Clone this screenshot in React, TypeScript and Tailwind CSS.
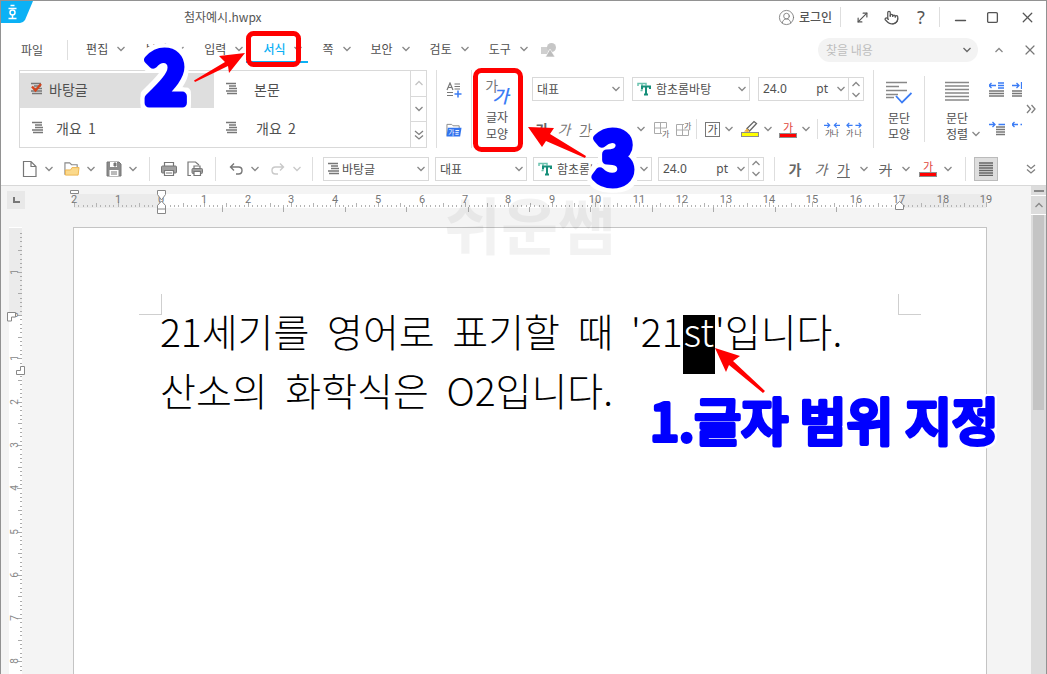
import React from "react";
import { MoveDiagonal, Pointer, X, Minus, Square, CircleUserRound } from "lucide-react";

type ChevronProps = { className?: string; up?: boolean };

function Chevron({ className = "text-[#888]", up = false }: ChevronProps) {
  return (
    <svg width="10" height="8" viewBox="0 0 10 8" className={`shrink-0 ${className}`} aria-hidden="true">
      <path d={up ? "M1.5 6 5 2.5 8.5 6" : "M1.5 2 5 5.5 8.5 2"} fill="none" stroke="currentColor" strokeWidth="1.3" />
    </svg>
  );
}

function Divider({ className = "mx-3 h-6" }: { className?: string }) {
  return <span className={`w-px shrink-0 bg-[#dedede] ${className}`} />;
}

type IconButtonProps = {
  label: string;
  chevron?: boolean;
  className?: string;
  chevronClass?: string;
  children: React.ReactNode;
};

function IconButton({ label, chevron = false, className = "", chevronClass, children }: IconButtonProps) {
  return (
    <button type="button" aria-label={label} className={`flex shrink-0 items-center gap-1.5 ${className}`}>
      <span className="flex h-5 w-4 items-center justify-center">{children}</span>
      {chevron && <Chevron className={chevronClass} />}
    </button>
  );
}

type ComboProps = {
  label: string;
  value: string;
  width: string;
  pad?: string;
  icon?: React.ReactNode;
};

function Combo({ label, value, width, pad = "pl-1", icon }: ComboProps) {
  return (
    <div className={`relative h-6 shrink-0 border border-[#d9d9d9] bg-white ${width}`}>
      {icon && <span className="pointer-events-none absolute top-0 left-1 flex h-full items-center">{icon}</span>}
      <select aria-label={label} className={`h-full w-full appearance-none bg-transparent pr-4 text-xs outline-none ${pad}`}>
        <option>{value}</option>
      </select>
      <span className="pointer-events-none absolute top-0 right-0.5 flex h-full items-center">
        <Chevron />
      </span>
    </div>
  );
}

function SizeBox() {
  return (
    <div className="flex h-6 w-[106px] shrink-0 border border-[#d9d9d9] bg-white">
      <input
        aria-label="글자 크기"
        defaultValue="24.0"
        className="w-13 bg-transparent pl-1 font-['Noto_Sans',sans-serif] text-xs outline-none"
      />
      <button type="button" aria-label="크기 목록" className="flex flex-1 items-center justify-end gap-2 pr-0.5">
        <span className="font-['Noto_Sans',sans-serif] text-xs">pt</span>
        <Chevron />
      </button>
      <span className="flex w-[15px] flex-col border-l border-[#d9d9d9]">
        <button type="button" aria-label="크게" className="flex flex-1 items-center justify-center">
          <Chevron up />
        </button>
        <button type="button" aria-label="작게" className="flex flex-1 items-center justify-center">
          <Chevron />
        </button>
      </span>
    </div>
  );
}

function StyleIcon({ checked = false }: { checked?: boolean }) {
  return (
    <svg width="12" height="13" viewBox="0 0 12 13" aria-hidden="true">
      <path d="M0 1.5H10M3 4H10M3 6.5H11M0 9H11M1 11.5H11" stroke="#777" strokeWidth="1.3" fill="none" />
      {checked && <path d="M1 4.5 4.5 8.5 10 2" stroke="#d2451e" strokeWidth="2.4" fill="none" />}
    </svg>
  );
}

function FontIcon() {
  return (
    <svg width="15" height="14" viewBox="0 0 15 14" aria-hidden="true">
      <path d="M1 4V1.5H9V3.500M5 1.500V8.500M3.500 8.500H5.500" stroke="#6cc3b0" strokeWidth="1.5" fill="none" />
      <path d="M5 7V4.500H13V7M9 4.500V12.500M7 12.500H11" stroke="#178f7a" strokeWidth="2" fill="none" />
    </svg>
  );
}

function FontColorIcon() {
  return (
    <span className="flex w-[18px] shrink-0 flex-col items-center">
      <span className="text-[11px] leading-3 text-[#e0473b]">가</span>
      <span className="h-[5px] w-[18px] border border-[#8d8d8d] bg-[#f00]" />
    </span>
  );
}

function HighlightIcon() {
  return (
    <svg width="18" height="18" viewBox="0 0 18 18" className="shrink-0" aria-hidden="true">
      <path d="M6 8.500 13 1.500 15.500 3.500 8.500 11Z" fill="#fff" stroke="#666" strokeWidth="1.3" />
      <path d="M3 11.500 6 8.500 8.500 11 7 12Z" fill="#f0b03f" />
      <rect x=".5" y="12.500" width="17" height="4" fill="#ff0" stroke="#8d8d8d" />
    </svg>
  );
}

function NewIcon() {
  return (
    <svg width="16" height="18" viewBox="0 0 16 18" aria-hidden="true">
      <path d="M1.500 1.500H9L14 6.500V16.500H1.500ZM9 1.500V6.500H14" fill="#fff" stroke="#777" strokeWidth="1.2" />
    </svg>
  );
}

function OpenIcon() {
  return (
    <svg width="17" height="16" viewBox="0 0 17 16" aria-hidden="true">
      <path d="M1 14V1.500H6L8 3.500H14V6" fill="#fff" stroke="#888" strokeWidth="1.2" />
      <path d="M1.500 14.500V9H7L8.500 6.500H16L15 14.500Z" fill="#fbd98b" stroke="#edb34c" />
    </svg>
  );
}

function SaveIcon() {
  return (
    <svg width="16" height="16" viewBox="0 0 16 16" aria-hidden="true">
      <path d="M1 1H13L15 3V15H1Z" fill="#8b8b8b" stroke="#777" />
      <path d="M4 1H11V6H4ZM3.500 9H12.500V15H3.500Z" fill="#fff" />
      <path d="M8 2H10V5H8ZM5 11H11M5 13H11" fill="#777" stroke="#777" />
    </svg>
  );
}

function PrintIcon() {
  return (
    <svg width="16" height="16" viewBox="0 0 16 16" aria-hidden="true">
      <path d="M3.500 5V1.500H12.500V5" fill="#fff" stroke="#777" strokeWidth="1.2" />
      <rect x=".5" y="5" width="15" height="7" rx="1" fill="#a0a0a0" stroke="#777" />
      <path d="M3.500 9.500H12.500V14.500H3.500Z" fill="#fff" stroke="#777" strokeWidth="1.2" />
      <path d="M5 12H11" stroke="#777" />
    </svg>
  );
}

function PreviewIcon() {
  return (
    <svg width="16" height="16" viewBox="0 0 16 16" aria-hidden="true">
      <path d="M4 14.500H1V1H8.500L12 4" fill="none" stroke="#777" strokeWidth="1.2" />
      <path d="M7 7V5H13V7" fill="#fff" stroke="#777" strokeWidth="1.2" />
      <rect x="5" y="7.500" width="10.500" height="5" rx="1" fill="#a0a0a0" stroke="#777" />
      <path d="M7 10.500H13.500V14.500H7Z" fill="#fff" stroke="#777" strokeWidth="1.2" />
    </svg>
  );
}

function UndoIcon({ flip = false }: { flip?: boolean }) {
  return (
    <svg width="14" height="14" viewBox="0 0 14 14" aria-hidden="true" className={flip ? "-scale-x-100 text-[#c9c9c9]" : "text-[#777]"}>
      <path d="M5 1.500 1.500 5 5 8.500M1.500 5H9.500Q13 5 13 8.500T9.500 12H7" fill="none" stroke="currentColor" strokeWidth="1.4" />
    </svg>
  );
}

function GridIcon({ alt = false }: { alt?: boolean }) {
  return (
    <svg width="16" height="17" viewBox="0 0 16 17" aria-hidden="true">
      <path
        d={alt ? "M.5 3.500H8M.5 3.500V14.500H12.500V9M6.500 3.500V14.500M.5 9H12.500" : "M.5 1.500H12.500V7M.5 1.500V12.500H8M6.500 1.500V12.500M.5 7H12.500"}
        fill="none"
        stroke="#aaa"
      />
      <text x="8" y={alt ? 8 : 16} fontSize="8" fill="#666">
        가
      </text>
    </svg>
  );
}

function SpacingIcon({ wide = false }: { wide?: boolean }) {
  return (
    <svg width="17" height="17" viewBox="0 0 17 17" aria-hidden="true">
      <path
        d={wide ? "M1 4H7M3.500 1.500 1 4 3.500 6.500M10 4H16M13.500 1.500 16 4 13.500 6.500" : "M0 4H6M3.500 1.500 6 4 3.500 6.500M11 4H17M13.500 1.500 11 4 13.500 6.500"}
        fill="none"
        stroke="#3b7cf5"
        strokeWidth="1.3"
      />
      <text x={wide ? 0 : 1} y="15" fontSize="8.5" fill="#555">
        가
      </text>
      <text x={wide ? 9 : 8} y="15" fontSize="8.5" fill="#555">
        나
      </text>
    </svg>
  );
}

function AddStyleIcon() {
  return (
    <svg width="16" height="17" viewBox="0 0 16 17" aria-hidden="true">
      <path d="M1 8 4 1 7 8M2 5.500H6" fill="none" stroke="#777" strokeWidth="1.2" />
      <path d="M8.500 2H14M8.500 4.500H14M8.500 7H14M1 10.500H7M1 13.500H7" stroke="#777" fill="none" strokeWidth="1.2" />
      <path d="M8.500 12H15.500M12 8.500V15.500" stroke="#3b7cf5" strokeWidth="1.5" />
    </svg>
  );
}

function StyleFolderIcon() {
  return (
    <svg width="17" height="15" viewBox="0 0 17 15" aria-hidden="true">
      <path d="M1 13V1H6L7.500 2.500H14V5" fill="#fff" stroke="#888" />
      <path d="M2 4.500H16.500L15 14H.5Z" fill="#3274ee" />
      <text x="2.500" y="12" fontSize="7" fill="#fff">
        가
      </text>
      <path d="M10 7.500H14M10 9.500H13.500M10 11.500H13.500" stroke="#fff" />
    </svg>
  );
}

function ParagraphShapeIcon() {
  return (
    <svg width="26" height="24" viewBox="0 0 26 24" aria-hidden="true">
      <path d="M0 1.500H21M0 5.500H13M0 9.500H21M0 13.500H12M0 16.500H8" stroke="#888" strokeWidth="1.6" />
      <path d="M10 15 16 21.500 25.500 12" fill="none" stroke="#3b7cf5" strokeWidth="1.8" />
    </svg>
  );
}

function JustifyIcon() {
  return (
    <svg width="24" height="24" viewBox="0 0 24 24" aria-hidden="true">
      <path d="M0 1.500H24M0 5H24M0 8.500H24M0 12H24M0 15.500H24M0 19H24" stroke="#888" strokeWidth="1.6" />
    </svg>
  );
}

function IndentIcon({ kind }: { kind: "out" | "in" | "first" | "hang" }) {
  const arrow = {
    out: "M0 3.500H7M2.500 1 0 3.500 2.500 6M9 1H15M9 3.500H15M9 6H15",
    in: "M0 3.500H7M4.500 1 7 3.500 4.500 6M9.500 0V7",
    first: "M0 3.500H6M3.500 1 6 3.500 3.500 6M9.500 3.500H16",
    hang: "M0 3.500H6M2.500 1 0 3.500 2.500 6M8.500 3.500H10",
  }[kind];
  const lines = {
    out: "M0 9H15M0 11.500H15M0 14H15",
    in: "M0 9H10M0 11.500H10M0 14H10",
    first: "M7 6H16M7 8.500H16M7 11H16M7 13.500H16",
    hang: "",
  }[kind];
  const narrow = kind === "in" || kind === "hang";
  return (
    <svg width={narrow ? 10 : 17} height="15" viewBox={narrow ? "0 0 10 15" : "0 0 17 15"} aria-hidden="true">
      <path d={arrow} fill="none" stroke="#3b7cf5" strokeWidth="1.3" />
      <path d={lines} fill="none" stroke="#777" strokeWidth="1.4" />
    </svg>
  );
}

function DoubleChevron({ className = "" }: { className?: string }) {
  return (
    <svg width="10" height="10" viewBox="0 0 10 10" aria-hidden="true" className={`text-[#808080] ${className}`}>
      <path d="M1 1 5 4.500 9 1M1 5.500 5 9 9 5.500" fill="none" stroke="currentColor" strokeWidth="1.3" />
    </svg>
  );
}

function TitleBar() {
  return (
    <header className="flex h-8 items-center">
      <svg width="33" height="23" viewBox="0 0 33 23" className="self-start" role="img" aria-label="한글">
        <path d="M0 0H32L24 19Q22 22 19 22H0Z" fill="#0bb1f5" />
        <path d="M9.500 4.500H13.500M7.500 7.500H15.500M11.500 13.500V17M7.500 17.500H15.500" stroke="#fff" strokeWidth="1.5" fill="none" />
        <circle cx="11.500" cy="11.500" r="2.500" fill="none" stroke="#fff" strokeWidth="1.5" />
      </svg>
      <h1 className="ml-[150px] text-xs text-[#555]">첨자예시.hwpx</h1>
      <div className="ml-auto flex items-center pr-2.5 text-[#555]">
        <button type="button" className="flex items-center gap-1 text-xs font-medium">
          <CircleUserRound size={17} strokeWidth={1.2} className="text-[#777]" />
          로그인
        </button>
        <Divider className="mx-2 h-5" />
        <button type="button" aria-label="전체 화면" className="pr-3.5 pl-1.5">
          <MoveDiagonal size={15} strokeWidth={1.9} />
        </button>
        <button type="button" aria-label="터치 모드" className="pr-4">
          <Pointer size={15} strokeWidth={2} />
        </button>
        <button type="button" aria-label="도움말" className="w-3 font-['Noto_Sans',sans-serif] text-lg leading-5">
          ?
        </button>
        <Divider className="mx-3 h-5" />
        <button type="button" aria-label="최소화" className="pt-1.5 pr-[17px]">
          <Minus size={17} strokeWidth={2} />
        </button>
        <button type="button" aria-label="최대화" className="pr-5">
          <Square size={13} strokeWidth={2.4} />
        </button>
        <button type="button" aria-label="닫기">
          <X size={17} strokeWidth={1.8} />
        </button>
      </div>
    </header>
  );
}

const menus = ["편집", "보기", "입력", "서식", "쪽", "보안", "검토", "도구"];

function MenuBar() {
  return (
    <nav className="flex h-[34px] items-center pl-5 text-xs">
      <button type="button">파일</button>
      <Divider className="mr-[18px] ml-6 h-5" />
      <ul className="flex gap-[19px]">
        {menus.map((name) => (
          <li key={name}>
            <button
              type="button"
              className={
                name === "서식"
                  ? "-mr-[5px] -mb-1 -ml-[17px] flex items-center gap-2 border-b-2 border-[#0bb1f5] pr-[5px] pb-1 pl-[17px] font-medium text-[#0bb1f5]"
                  : "flex items-center gap-2"
              }
            >
              {name}
              <Chevron />
            </button>
          </li>
        ))}
      </ul>
      <svg width="16" height="15" viewBox="0 0 16 15" className="ml-3" aria-hidden="true">
        <path d="M0 4H7V11H0Z" fill="#cfcfcf" />
        <circle cx="10.500" cy="4.500" r="4.500" fill="#c6c6c6" />
        <path d="M9 6 14 14H4.500Z" fill="#bdbdbd" stroke="#fff" strokeWidth=".6" />
      </svg>
      <div className="ml-auto flex h-6 w-40 items-center rounded-full bg-[#f3f3f3] pr-1.5 pl-2">
        <input aria-label="찾을 내용" placeholder="찾을 내용" className="min-w-0 flex-1 bg-transparent text-xs outline-none placeholder:text-[#bdbdbd]" />
        <Chevron className="text-[#666]" />
      </div>
      <button type="button" aria-label="리본 접기" className="ml-4">
        <Chevron up />
      </button>
      <button type="button" aria-label="문서 닫기" className="mr-2 ml-[18px]">
        <X size={16} strokeWidth={1.8} className="text-[#777]" />
      </button>
    </nav>
  );
}

function Ribbon() {
  return (
    <section aria-label="서식" className="flex h-[85px] items-start pt-[3px] pl-[18px] text-xs">
      <div className="flex h-[78px] w-[408px] shrink-0 border border-[#d9d9d9] text-sm">
        <div className="grid flex-1 grid-cols-[194px_194px] grid-rows-2 gap-y-1 pt-0.5">
          <button type="button" className="flex items-center gap-1.5 bg-[#dedede] pb-1 pl-[11px]">
            <StyleIcon checked />
            바탕글
          </button>
          <button type="button" className="flex items-center gap-4 pb-1 pl-3">
            <StyleIcon />
            본문
          </button>
          <button type="button" className="flex items-center gap-3 pb-1 pl-3">
            <StyleIcon />
            <span className="whitespace-pre">개요  1</span>
          </button>
          <button type="button" className="flex items-center gap-[18px] pb-1 pl-3">
            <StyleIcon />
            <span className="whitespace-pre">개요  2</span>
          </button>
        </div>
        <div className="flex w-4 flex-col divide-y divide-[#d9d9d9] border-l border-[#d9d9d9]">
          <button type="button" aria-label="이전 스타일" className="flex flex-1 items-center justify-center">
            <Chevron up className="text-[#c4c4c4]" />
          </button>
          <button type="button" aria-label="다음 스타일" className="flex flex-1 items-center justify-center">
            <Chevron />
          </button>
          <button type="button" aria-label="모든 스타일" className="flex flex-1 items-center justify-center">
            <DoubleChevron />
          </button>
        </div>
      </div>
      <Divider className="mx-[9px] h-[78px]" />
      <div className="flex flex-col gap-5 pt-2.5">
        <IconButton label="스타일 추가">
          <AddStyleIcon />
        </IconButton>
        <IconButton label="스타일마당">
          <StyleFolderIcon />
        </IconButton>
      </div>
      <Divider className="ml-[9px] h-[78px]" />
      <button type="button" className="flex w-[50px] shrink-0 flex-col items-center leading-[17px]">
        <span className="flex h-[38px] items-center pt-1 text-[#777]">
          <span className="pb-3 text-sm">가</span>
          <span className="-ml-1.5 pt-2 text-lg font-medium text-[#3b7cf5] italic">가</span>
        </span>
        <span>글자</span>
        <span>모양</span>
      </button>
      <div className="ml-2.5 flex shrink-0 flex-col gap-4 pt-[7px]">
        <div className="flex gap-2">
          <Combo label="언어" value="대표" width="w-[92px]" />
          <Combo label="글꼴" value="함초롬바탕" width="w-[118px]" pad="pl-[23px]" icon={<FontIcon />} />
          <SizeBox />
        </div>
        <div className="flex h-6 items-center">
          <button type="button" className="w-5 text-sm font-bold text-[#666]">가</button>
          <button type="button" className="w-6 text-sm text-[#777] italic">가</button>
          <button type="button" className="w-5 text-sm text-[#777] underline">가</button>
          <button type="button" aria-label="밑줄 모양" className="ml-10">
            <Chevron />
          </button>
          <IconButton label="안쪽 테두리" className="ml-2">
            <GridIcon />
          </IconButton>
          <IconButton label="바깥 테두리" className="ml-1.5">
            <GridIcon alt />
          </IconButton>
          <Divider className="mx-1 h-5" />
          <button type="button" aria-label="글자 테두리" className="ml-1 flex items-center gap-1">
            <span className="h-[15px] w-[15px] border border-[#777] text-center text-[11px] leading-[13px]">가</span>
            <Chevron />
          </button>
          <button type="button" aria-label="형광펜" className="ml-[7px] flex items-center gap-1">
            <HighlightIcon />
            <Chevron />
          </button>
          <button type="button" aria-label="글자 색" className="ml-1.5 flex items-center gap-1">
            <FontColorIcon />
            <Chevron />
          </button>
          <Divider className="mx-1.5 h-5" />
          <IconButton label="자간 좁게">
            <SpacingIcon />
          </IconButton>
          <IconButton label="자간 넓게" className="ml-1.5">
            <SpacingIcon wide />
          </IconButton>
        </div>
      </div>
      <Divider className="ml-[9px] h-[78px]" />
      <button type="button" className="flex w-[50px] shrink-0 flex-col items-center leading-4">
        <span className="flex h-10 items-center pt-1.5">
          <ParagraphShapeIcon />
        </span>
        <span>문단</span>
        <span>모양</span>
      </button>
      <Divider className="mt-1.5 h-[66px]" />
      <div className="flex w-16 shrink-0 items-end">
        <button type="button" className="ml-5 flex w-6 flex-col items-center leading-4">
          <span className="flex h-10 items-center pt-1.5">
            <JustifyIcon />
          </span>
          <span>문단</span>
          <span>정렬</span>
        </button>
        <span className="mb-1 ml-0.5">
          <Chevron />
        </span>
      </div>
      <div className="grid shrink-0 grid-cols-[17px_10px] gap-x-1.5 gap-y-6 pt-3">
        <button type="button" aria-label="왼쪽 여백 줄이기"><IndentIcon kind="out" /></button>
        <button type="button" aria-label="왼쪽 여백 늘리기"><IndentIcon kind="in" /></button>
        <button type="button" aria-label="첫 줄 들여쓰기"><IndentIcon kind="first" /></button>
        <button type="button" aria-label="첫 줄 내어쓰기"><IndentIcon kind="hang" /></button>
      </div>
      <button type="button" aria-label="더 보기" className="mt-[34px] ml-1">
        <DoubleChevron className="-rotate-90" />
      </button>
    </section>
  );
}

function Toolbar() {
  return (
    <div role="toolbar" aria-label="기본 도구" className="flex h-[34px] items-center border-b border-[#d8d8d8] pl-[21px] text-xs">
      <div className="flex gap-2.5">
        <IconButton label="새 문서" chevron><NewIcon /></IconButton>
        <IconButton label="불러오기" chevron><OpenIcon /></IconButton>
        <IconButton label="저장하기" chevron><SaveIcon /></IconButton>
      </div>
      <Divider className="mx-[11px] h-6" />
      <div className="flex gap-2.5">
        <IconButton label="인쇄"><PrintIcon /></IconButton>
        <IconButton label="미리 보기"><PreviewIcon /></IconButton>
      </div>
      <Divider className="mx-3 h-6" />
      <div className="flex gap-2.5">
        <IconButton label="되돌리기" chevron><UndoIcon /></IconButton>
        <IconButton label="다시 실행" chevron chevronClass="text-[#c9c9c9]"><UndoIcon flip /></IconButton>
      </div>
      <Divider className="mx-2.5 h-6" />
      <div className="flex gap-1.5">
        <Combo label="스타일" value="바탕글" width="w-[106px]" pad="pl-[18px]" icon={<StyleIcon />} />
        <Combo label="언어" value="대표" width="w-[92px]" />
        <Combo label="글꼴" value="함초롬바탕" width="w-[119px]" pad="pl-[23px]" icon={<FontIcon />} />
        <SizeBox />
      </div>
      <Divider className="mx-2.5 h-6" />
      <button type="button" className="w-5 text-sm font-bold text-[#666]">가</button>
      <button type="button" className="ml-1.5 w-5 text-sm text-[#666] italic">가</button>
      <button type="button" className="ml-1.5 flex w-8 items-center justify-between text-sm text-[#666]">
        <span className="underline underline-offset-2">가</span>
        <Chevron />
      </button>
      <button type="button" className="ml-2.5 flex w-8 items-center justify-between text-sm text-[#666]">
        <span className="line-through">가</span>
        <Chevron />
      </button>
      <button type="button" aria-label="글자 색" className="ml-2 flex items-center gap-1.5">
        <FontColorIcon />
        <Chevron />
      </button>
      <Divider className="mr-2 ml-3 h-6" />
      <button type="button" aria-label="양쪽 정렬" aria-pressed="true" className="flex h-6 w-6 items-center justify-center border border-[#bbb] bg-[#dedede]">
        <svg width="14" height="14" viewBox="0 0 14 14" aria-hidden="true">
          <path d="M0 1H14M0 3.500H14M0 6H14M0 8.500H14M0 11H14M0 13.500H14" stroke="#666" strokeWidth="1.3" />
        </svg>
      </button>
      <button type="button" aria-label="도구 더 보기" className="mr-2.5 ml-auto">
        <DoubleChevron />
      </button>
    </div>
  );
}

const CM = 43.43;

function range(from: number, to: number) {
  return Array.from({ length: to - from + 1 }, (_, i) => from + i);
}

function HorizontalRuler() {
  const zero = 94;
  return (
    <svg width="930" height="41" viewBox="0 0 930 41" className="shrink-0" role="img" aria-label="가로 눈금자">
      <rect x="7" y="8" width="912" height="14" fill="#fff" />
      <rect x="7" y="8" width="87" height="14" fill="#ebebeb" />
      <rect x="832" y="8" width="87" height="14" fill="#ebebeb" />
      {range(-20, 190).map((n) => (
        <rect key={n} x={Math.round(zero + (n * CM) / 10)} y={n % 10 === 0 ? 16 : n % 5 === 0 ? 17 : 19} width="1" height={n % 10 === 0 ? 5 : n % 5 === 0 ? 4 : 2} fill="#b4b4b4" />
      ))}
      {range(-2, 19).map((n) => (
        <text key={n} x={Math.round(zero + n * CM)} y="17" textAnchor="middle" fontSize="11" fill="#777" className="font-['Roboto',sans-serif]">
          {Math.abs(n)}
        </text>
      ))}
      {range(0, 10).map((n) => (
        <rect key={n} x={Math.round(155 + n * 61.4)} y="21" width="1" height="5" fill="#aaa" />
      ))}
      <path d="M3.500 4.500H11.500V7.500H3.500Z" fill="#fff" stroke="#888" />
      <path d="M90.500 4.500H98.500V8.500L94.500 14 90.500 8.500ZM94.500 15 98.500 19.500V27.500H90.500V19.500ZM90.500 23H98.500" fill="#fff" stroke="#888" />
      <path d="M832.500 15.500 836.500 19V23.500H828.500V19Z" fill="#fff" stroke="#888" />
    </svg>
  );
}

function VerticalRuler() {
  const zero = 88;
  return (
    <svg width="24" height="448" viewBox="0 0 24 448" className="shrink-0" role="img" aria-label="세로 눈금자">
      <rect x="8" y="0" width="13" height="448" fill="#fff" />
      <rect x="8" y="1" width="13" height="87" fill="#ebebeb" />
      {range(-19, 82).map((n) => (
        <rect key={n} y={Math.round(zero + (n * 43.3) / 10)} x={n % 10 === 0 ? 16 : n % 5 === 0 ? 17 : 19} height="1" width={n % 10 === 0 ? 5 : n % 5 === 0 ? 4 : 2} fill="#aaa" />
      ))}
      {range(-1, 8).map((n) => (
        <text
          key={n}
          x="0"
          y="0"
          transform={`translate(17 ${Math.round(zero + n * 43.3)}) rotate(-90)`}
          textAnchor="middle"
          fontSize="10"
          fill="#888"
          className="font-['Roboto',sans-serif]"
        >
          {Math.abs(n)}
        </text>
      ))}
      <path d="M6.500 85.500H14.500V90H10.500V94H6.500Z" fill="#fff" stroke="#888" />
      <path d="M19.500 139.500H23.500V147.500H15.500V143.500H19.500Z" fill="#fff" stroke="#888" />
    </svg>
  );
}

function Page() {
  return (
    <main className="mr-11 ml-12 flex-1 border border-b-0 border-[#c4c4c4] bg-white pt-[66px]">
      <div className="mx-[65px] flex h-[21px] justify-between">
        <span className="w-[23px] border-r border-b border-[#cfcfcf]" />
        <span className="w-[23px] border-b border-l border-[#cfcfcf]" />
      </div>
      <div className="pl-[86px] text-[39px] leading-[30px] font-light text-black">
        <p className="flex h-[59px] whitespace-pre">
          <span className="mr-[9px]">21세기를 </span>
          <span className="mr-[9px]">영어로 </span>
          <span className="mr-[9px]">표기할 </span>
          <span className="mr-[9px]">때 </span>
          <span>&apos;21</span>
          <mark className="bg-black px-px text-white">st</mark>
          <span>&apos;입니다.</span>
        </p>
        <p className="flex h-[59px] whitespace-pre">
          <span className="mr-[9px]">산소의 </span>
          <span className="mr-[9px]">화학식은 </span>
          <span>O2입니다.</span>
        </p>
      </div>
    </main>
  );
}

function Workspace() {
  return (
    <div className="flex flex-1 bg-[#f4f4f4]">
      <div className="flex min-w-0 flex-1 flex-col">
        <div className="flex h-[41px] overflow-hidden">
          <div className="w-[66px] shrink-0 pt-[5px] pl-1.5">
            <span className="flex h-[18px] w-[18px] items-center justify-center bg-[#e8e8e8]">
              <span className="h-1.5 w-[7px] border-b-2 border-l-2 border-[#777]" />
            </span>
          </div>
          <HorizontalRuler />
        </div>
        <div className="flex flex-1">
          <VerticalRuler />
          <Page />
        </div>
      </div>
      <div className="flex w-[15px] flex-col bg-[#dcdcdc]">
        <span className="flex h-2.5 items-center justify-center border-b border-white">
          <span className="h-0.5 w-2.5 bg-[#888]" />
        </span>
        <button type="button" aria-label="위로" className="flex h-[19px] items-center justify-center border-b border-white">
          <Chevron up />
        </button>
        <span className="ml-0.5 h-[195px] w-[11px] bg-[#c4c4c4]" />
      </div>
    </div>
  );
}

function Annotations() {
  return (
    <div className="pointer-events-none absolute inset-0 overflow-hidden">
      <span className="absolute top-[178px] left-[443px] text-[62px] leading-[88px] font-bold text-black/5">쉬운쌤</span>
      <svg width="1047" height="674" viewBox="0 0 1047 674" className="absolute -top-px -left-px">
        <g
          fill="#00f"
          stroke="#00f"
          strokeLinejoin="round"
          className="font-medium [filter:drop-shadow(4px_0_#fff)_drop-shadow(-4px_0_#fff)_drop-shadow(0_4px_#fff)_drop-shadow(0_-4px_#fff)]"
        >
          <text x="146" y="103" fontSize="70" strokeWidth="9">
            2
          </text>
          <text x="594" y="183" fontSize="70" strokeWidth="9">
            3
          </text>
        </g>
        <text
          x="650"
          y="441"
          fontSize="51"
          fill="#00f"
          stroke="#00f"
          strokeWidth="4"
          strokeLinejoin="round"
          className="font-medium [filter:drop-shadow(2px_0_#fff)_drop-shadow(-2px_0_#fff)_drop-shadow(0_2px_#fff)_drop-shadow(0_-2px_#fff)]"
        >
          1.글자 범위 지정
        </text>
        <rect x="248.500" y="33.500" width="50" height="31" rx="5" fill="none" stroke="#f00" strokeWidth="5" />
        <rect x="475.500" y="70.500" width="45" height="79" rx="6" fill="none" stroke="#f00" strokeWidth="5" />
        <path d="M245 53 219 56 225 62 194 80.500 195 82 228 66 229 73Z" fill="#f00" />
        <path d="M528 127 554 128 550 134 586 156 585 158 546 141 542 147Z" fill="#f00" />
        <path d="M715 348 740 356 733 361 765 391 763 393 729 365 726 372Z" fill="#f00" />
      </svg>
    </div>
  );
}

export default function App() {
  return (
    <div className="relative flex min-h-screen flex-col overflow-hidden border border-b-0 border-[#929292] bg-white font-['Noto_Sans_CJK_KR',sans-serif] text-[#505050]">
      <TitleBar />
      <MenuBar />
      <Ribbon />
      <Toolbar />
      <Workspace />
      <Annotations />
    </div>
  );
}
